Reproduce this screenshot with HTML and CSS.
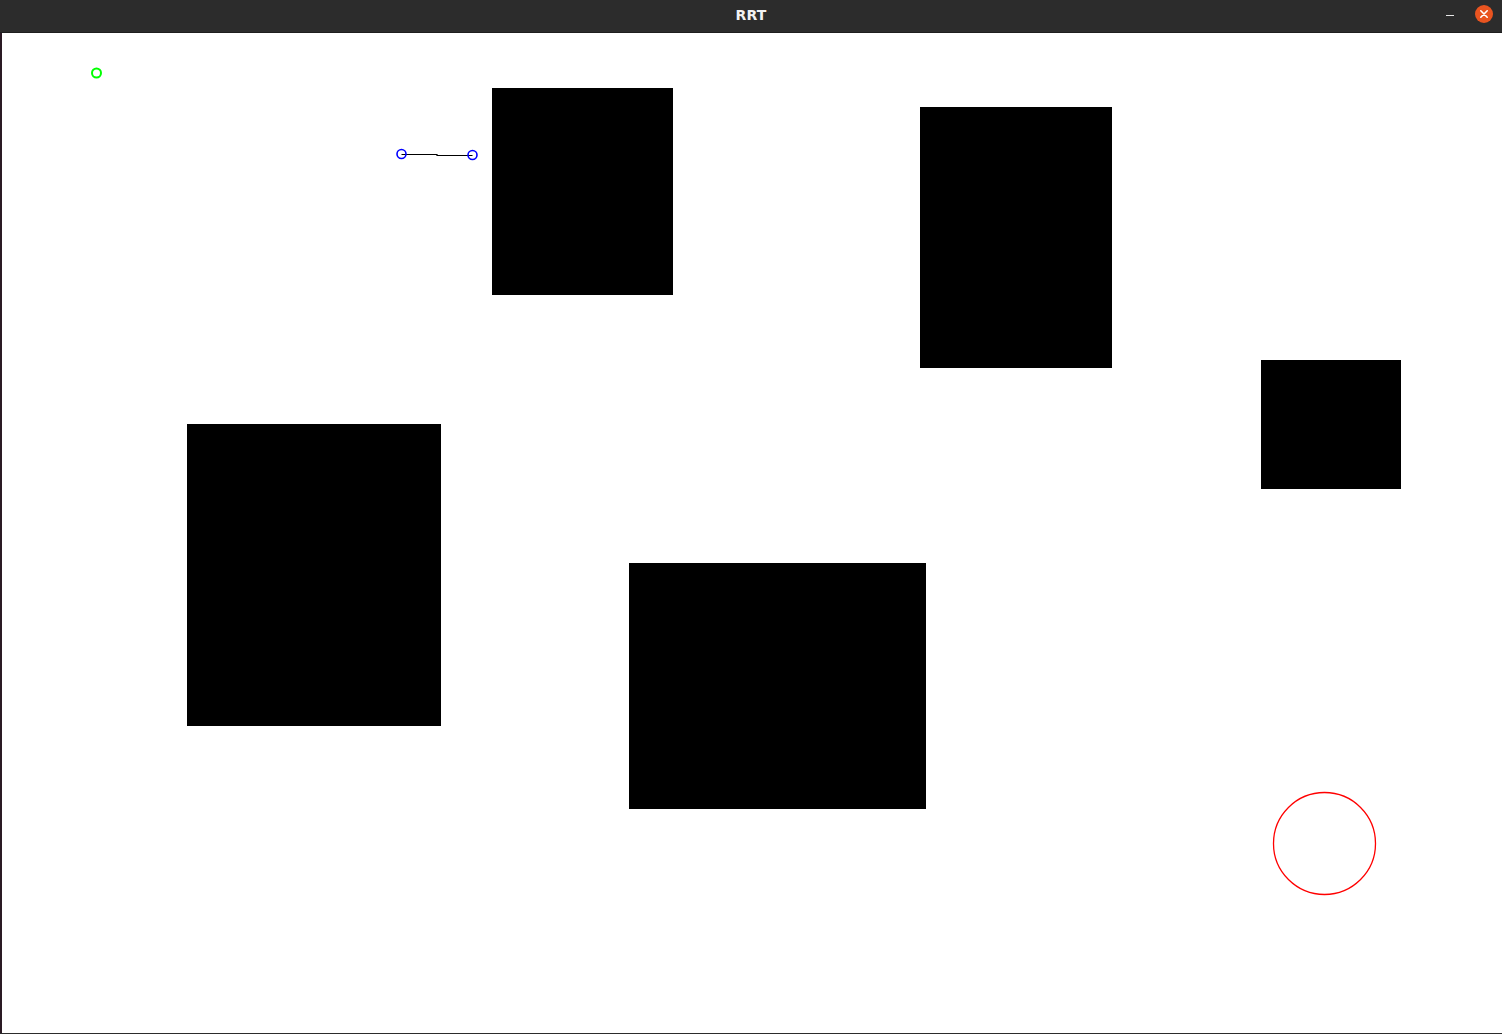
FILE: index.html
```html
<!DOCTYPE html>
<html>
<head>
<meta charset="utf-8">
<title>RRT</title>
<link rel="stylesheet" href="styles.css">
</head>
<body>
<div class="window">
  <header class="titlebar">
    <span class="title">RRT</span>
    <div class="controls">
      <span class="minimize"></span>
      <span class="close">
        <svg width="18" height="18" viewBox="0 0 18 18">
          <circle cx="9" cy="9" r="9" fill="#e95420"/>
          <path d="M5.8 5.8 L12.2 12.2 M12.2 5.8 L5.8 12.2" stroke="#fff" stroke-width="1.6" stroke-linecap="round"/>
        </svg>
      </span>
    </div>
  </header>
  <div class="body-row">
    <div class="edge"></div>
    <svg class="canvas" viewBox="2 33 1500 1000" preserveAspectRatio="none">
      <rect x="492" y="88" width="181" height="207" fill="#000"/>
      <rect x="920" y="107" width="192" height="261" fill="#000"/>
      <rect x="1261" y="360" width="140" height="129" fill="#000"/>
      <rect x="187" y="424" width="254" height="302" fill="#000"/>
      <rect x="629" y="563" width="297" height="246" fill="#000"/>
      <circle cx="96.5" cy="73" r="4.5" fill="none" stroke="#00ff00" stroke-width="2"/>
      <path d="M401.5 154.5 H437 V155.5 H472.5" fill="none" stroke="#000" stroke-width="1.2"/>
      <circle cx="401.5" cy="154" r="4.5" fill="none" stroke="#0000ff" stroke-width="1.6"/>
      <circle cx="472.5" cy="155" r="4.5" fill="none" stroke="#0000ff" stroke-width="1.6"/>
      <circle cx="1324.5" cy="843.5" r="51" fill="none" stroke="#ff0000" stroke-width="1.3"/>
    </svg>
  </div>
  <div class="bottom"></div>
</div>
</body>
</html>
```

FILE: styles.css
```css
html, body {
  margin: 0;
  padding: 0;
  width: 1502px;
  height: 1034px;
  overflow: hidden;
  background: #2c2c2c;
}

.window {
  display: flex;
  flex-direction: column;
  width: 1502px;
  height: 1034px;
}

.titlebar {
  position: relative;
  height: 33px;
  flex: 0 0 33px;
  background: #2c2c2c;
  display: flex;
  align-items: center;
  justify-content: center;
  box-sizing: border-box;
  border-bottom: 1px solid #1e1e1e;
}

.title {
  color: #f2f2f2;
  font-family: "DejaVu Sans", "Liberation Sans", sans-serif;
  font-weight: bold;
  font-size: 14px;
  letter-spacing: 0.2px;
  margin-top: -2px;
}

.controls {
  position: absolute;
  right: 9px;
  top: 5px;
  display: flex;
  align-items: center;
  gap: 21px;
}

.minimize {
  display: block;
  width: 8px;
  height: 1px;
  background: #e6e6e6;
  margin-top: 2px;
}

.close {
  display: block;
  width: 18px;
  height: 18px;
}

.close svg {
  display: block;
}

.body-row {
  display: flex;
  flex: 0 0 1000px;
  height: 1000px;
}

.edge {
  width: 2px;
  flex: 0 0 2px;
  background: #2a1a24;
}

.canvas {
  display: block;
  width: 1500px;
  height: 1000px;
  background: #ffffff;
}

.bottom {
  flex: 0 0 1px;
  background: #2c2c2c;
}
```
